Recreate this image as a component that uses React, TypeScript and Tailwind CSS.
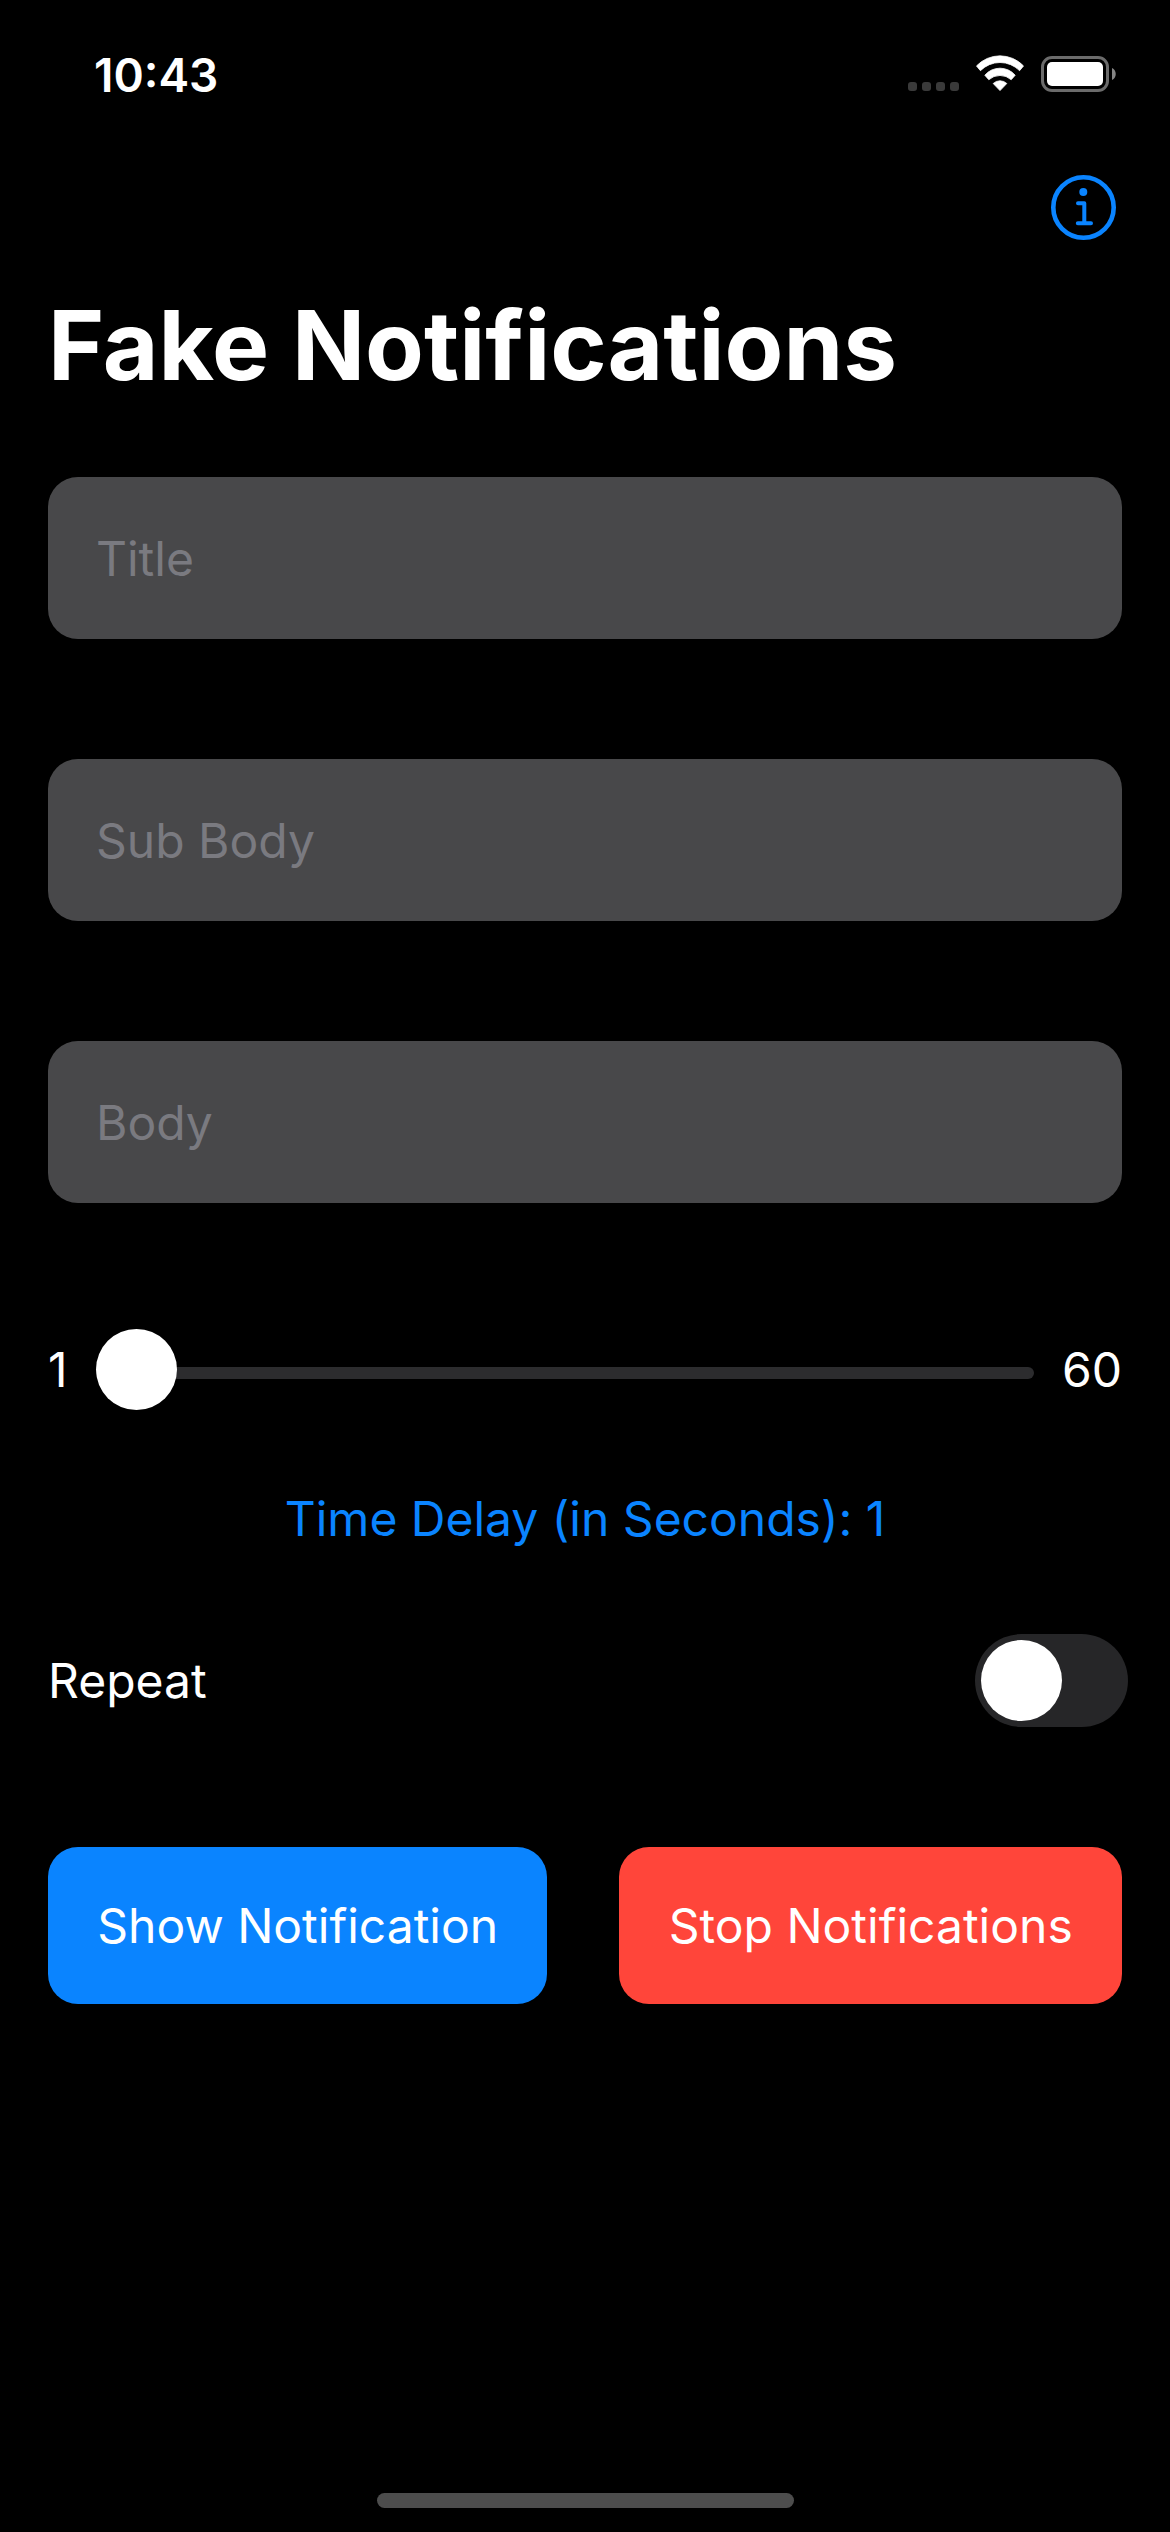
import { useState } from "react";

function SignalDots() {
  return (
    <svg width="51" height="37" viewBox="0 0 51 37" fill="#3a3a3a" aria-hidden="true">
      <rect x="0" y="27" width="9" height="9" rx="3" />
      <rect x="14" y="27" width="9" height="9" rx="3" />
      <rect x="28" y="27" width="9" height="9" rx="3" />
      <rect x="42" y="27" width="9" height="9" rx="3" />
    </svg>
  );
}

function WifiIcon() {
  return (
    <svg width="48" height="37" viewBox="0 0 48 37" fill="#fff" stroke="#fff" strokeWidth="0.8" strokeLinejoin="round" aria-hidden="true">
      <path d="M0.5 10.9A32.5 32.5 0 0 1 47.5 10.9L43.6 15.7A27.5 27.5 0 0 0 4.4 15.7Z" />
      <path d="M8.8 20.2A20 20 0 0 1 39.2 20.2L35.2 24.7A16.9 16.9 0 0 0 12.8 24.7Z" />
      <path d="M17.2 28.5A9.9 9.9 0 0 1 30.8 28.5L24 35.6Z" />
    </svg>
  );
}

function BatteryIcon() {
  return (
    <svg width="75" height="37" viewBox="0 0 75 37" aria-hidden="true">
      <rect x="1.5" y="2.5" width="65" height="33" rx="9.5" fill="none" stroke="#6b6b6b" strokeWidth="3" />
      <rect x="6" y="7" width="56" height="24" rx="5" fill="#fff" />
      <path d="M71 13C76 15 76 23 71 25Z" fill="#858585" />
    </svg>
  );
}

function InfoIcon() {
  return (
    <svg width="65" height="65" viewBox="0 0 65 65" fill="none" stroke="#0a84ff" strokeLinecap="round" strokeLinejoin="round" aria-hidden="true">
      <circle cx="32.5" cy="32.5" r="30.2" strokeWidth="4.6" />
      <circle cx="32.3" cy="17" r="4" fill="#0a84ff" stroke="none" />
      <path d="M27 28.3H33.3V48.3M26.8 48.3H40" strokeWidth="4" />
    </svg>
  );
}

function Field({ id, label }: { id: string; label: string }) {
  return (
    <input
      id={id}
      type="text"
      aria-label={label}
      placeholder={label}
      className="block h-[162px] w-full rounded-[30px] bg-[#48484a] px-12 text-white outline-none placeholder:text-[#7a7a80] placeholder:opacity-100"
    />
  );
}

export default function App() {
  const [delay, setDelay] = useState(1);
  const [repeat, setRepeat] = useState(false);

  return (
    <div className="flex min-h-screen flex-col bg-black font-['Inter',sans-serif] text-[48px] leading-[62px] text-white">
      <header className="flex items-start justify-between pt-[55px] pr-[54px] pb-[46px] pl-[94px]">
        <span className="text-[46px] leading-[40px] font-semibold">10:43</span>
        <div className="flex gap-[17px]">
          <SignalDots />
          <WifiIcon />
          <BatteryIcon />
        </div>
      </header>

      <nav className="flex h-[132px] items-center justify-end pr-[54px]">
        <button type="button" aria-label="Information">
          <InfoIcon />
        </button>
      </nav>

      <main className="flex flex-col px-12">
        <h1 className="text-[96px] leading-[144px] font-bold">Fake Notifications</h1>

        <div className="mt-[60px] flex flex-col gap-[120px]">
          <Field id="title" label="Title" />
          <Field id="sub-body" label="Sub Body" />
          <Field id="body" label="Body" />
        </div>

        <div className="mt-[120px] flex h-[93px] items-center gap-7">
          <span>1</span>
          <input
            id="delay"
            type="range"
            min={1}
            max={60}
            value={delay}
            onChange={(e) => setDelay(Number(e.target.value))}
            className="h-[81px] min-w-0 flex-1 appearance-none bg-transparent outline-none [&::-webkit-slider-runnable-track]:mt-[6px] [&::-webkit-slider-runnable-track]:h-3 [&::-webkit-slider-runnable-track]:rounded-full [&::-webkit-slider-runnable-track]:bg-[#2c2c2e] [&::-webkit-slider-thumb]:-mt-[38px] [&::-webkit-slider-thumb]:size-[81px] [&::-webkit-slider-thumb]:appearance-none [&::-webkit-slider-thumb]:rounded-full [&::-webkit-slider-thumb]:bg-white"
          />
          <span>60</span>
        </div>

        <label htmlFor="delay" className="mt-[72px] text-center text-[#0a84ff]">
          Time Delay (in Seconds): {delay}
        </label>

        <div className="mt-[84px] -mr-[6px] flex items-center justify-between">
          <label htmlFor="repeat">Repeat</label>
          <input
            id="repeat"
            type="checkbox"
            role="switch"
            checked={repeat}
            onChange={(e) => setRepeat(e.target.checked)}
            className="flex h-[93px] w-[153px] appearance-none items-center rounded-full bg-[#262628] px-[6px] outline-none before:size-[81px] before:rounded-full before:bg-white checked:justify-end checked:bg-[#30d158]"
          />
        </div>

        <div className="mt-[120px] flex gap-[72px]">
          <button type="button" className="h-[157px] flex-auto rounded-[30px] bg-[#0a84ff] whitespace-nowrap">
            Show Notification
          </button>
          <button type="button" className="h-[157px] flex-auto rounded-[30px] bg-[#ff453a] whitespace-nowrap">
            Stop Notifications
          </button>
        </div>
      </main>

      <footer className="mt-auto flex justify-center pt-12 pb-6">
        <div className="h-[15px] w-[417px] rounded-full bg-[#4d4d4d]" />
      </footer>
    </div>
  );
}
